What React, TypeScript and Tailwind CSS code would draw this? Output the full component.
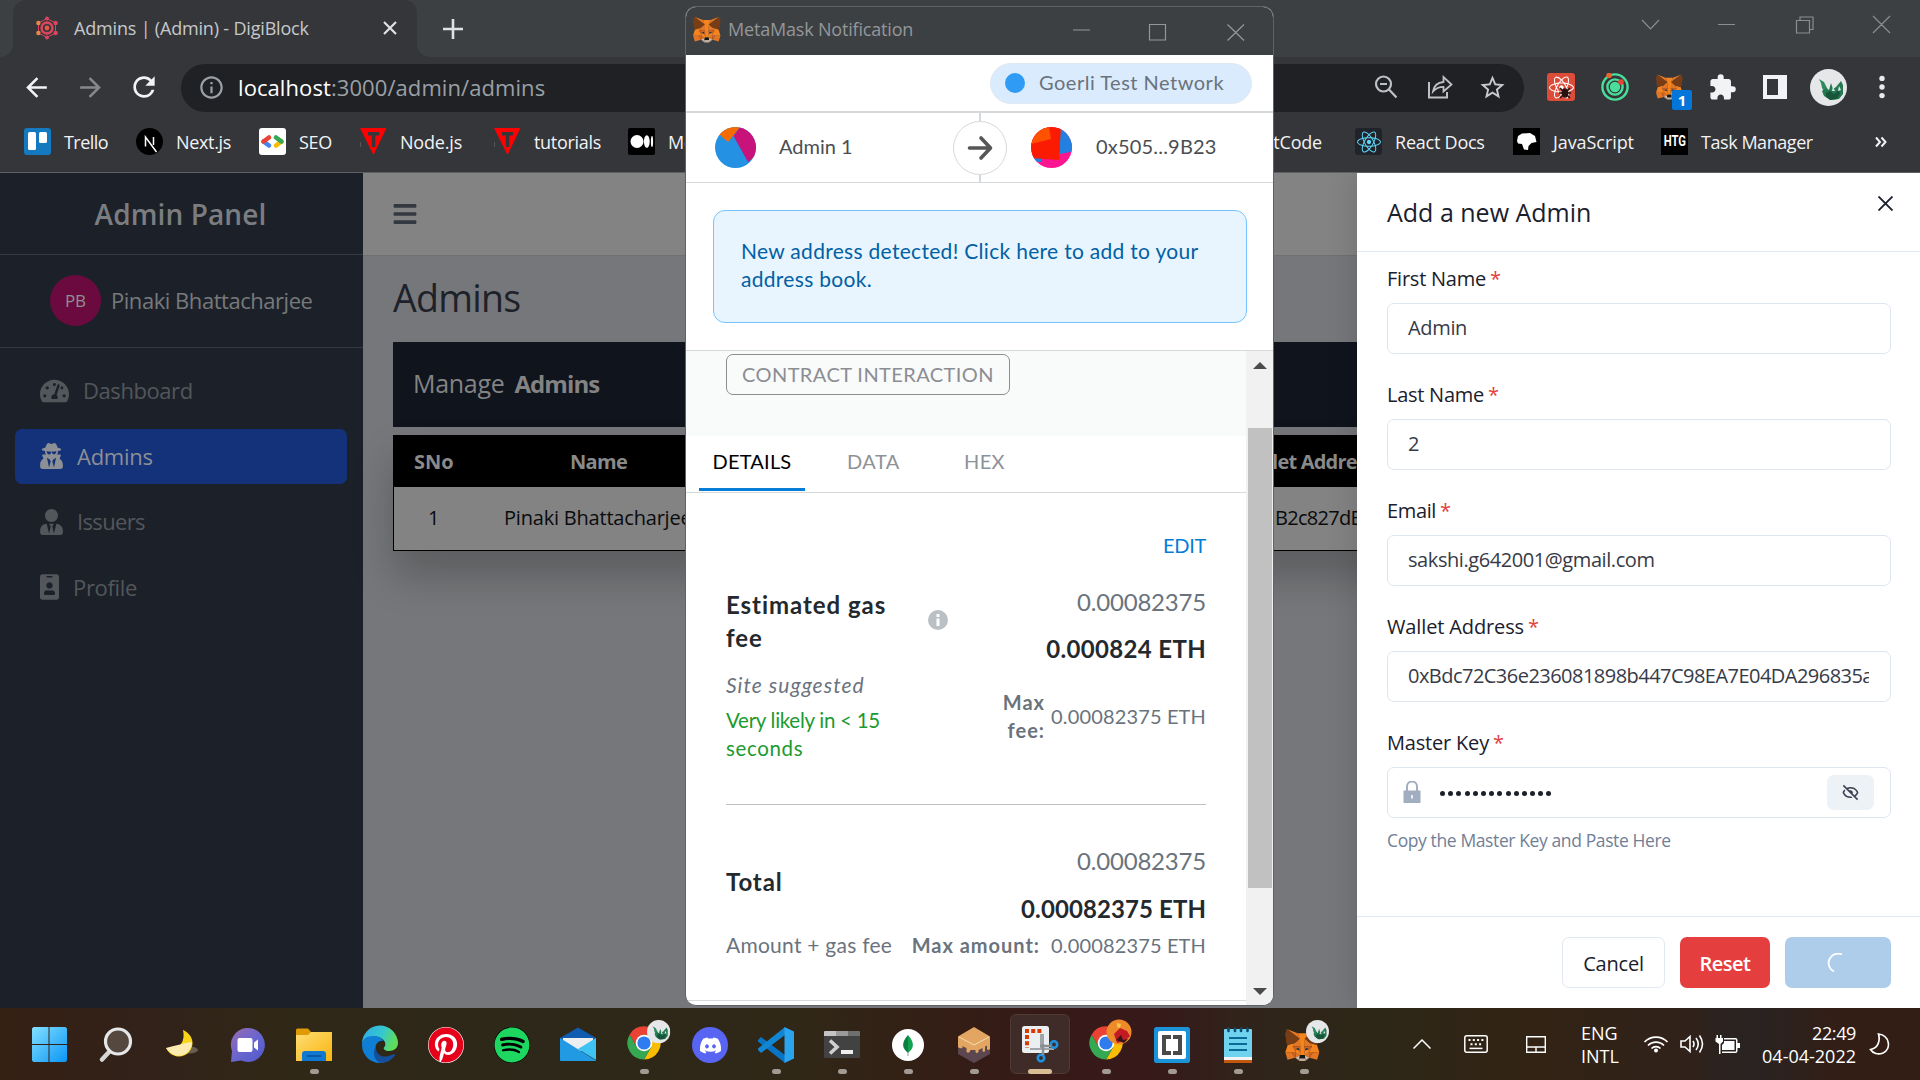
import type { ReactNode } from "react";
import { FaBars, FaDiscord, FaIdBadge, FaPinterest, FaReact, FaSpotify, FaTachometerAlt, FaUserSecret, FaUserTie } from "react-icons/fa";
import { MdArrowBack, MdArrowForward, MdExtension, MdInfoOutline, MdRefresh, MdStarBorder } from "react-icons/md";
import { BiHide } from "react-icons/bi";

const FOX: [string, string][] = [
  ["#E17726", "M32.96 1 19.82 10.7l2.45-5.73z"],
  ["#E27625", "m2.66 1 13.02 9.8L13.35 4.98zM28.23 23.53l-3.5 5.34 7.49 2.06 2.14-7.28zM1.27 23.65l2.13 7.28 7.47-2.06-3.48-5.34zM10.47 14.51l-2.08 3.14 7.4.34-.25-7.97zM25.15 14.51l-5.16-4.58-.17 8.06 7.4-.34zM10.87 28.87l4.49-2.16-3.86-3.01zM20.27 26.71l4.46 2.16-.61-5.17z"],
  ["#D5BFB2", "m24.73 28.87-4.46-2.16.37 2.89-.04 1.23zM10.87 28.87l4.16 1.96-.03-1.23.36-2.89z"],
  ["#CC6228", "m10.87 28.87.65-5.34-4.13.12zM24.1 23.53l.63 5.34 3.5-5.22zM27.22 17.65l-7.4.34.69 3.8 1.09-2.29 2.64 1.2zM11.38 20.69l2.63-1.2 1.09 2.3.69-3.8-7.4-.34z"],
  ["#233447", "m15.1 21.78-3.72-1.09 2.63-1.2zM20.51 21.78l1.09-2.29 2.64 1.2z"],
  ["#E27525", "m8.39 17.65 3.1 6.05-.1-3.01zM24.24 20.69l-.12 3.01 3.1-6.05zM15.79 17.99l-.69 3.8.87 4.48.2-5.91zM19.82 17.99l-.37 2.35.19 5.93.87-4.49z"],
  ["#F5841F", "m20.51 21.78-.87 4.49.63.44 3.85-3.01.12-3.01zM11.38 20.69l.11 3.01 3.87 3.01.61-.44-.87-4.48zM32.04 16.52l-6.89-2.01 2.07 3.14-3.1 6.05 4.11-.05h6.13zM10.47 14.51l-6.9 2.01-2.3 7.13h6.12l4.1.05-3.1-6.05zM19.82 17.99l.44-7.6 2-5.41h-8.91l1.99 5.41.45 7.6.16 2.37.01 5.91h3.67l.02-5.91z"],
  ["#C0AC9D", "m20.6 30.83.04-1.23-.33-.29h-5l-.31.29.03 1.23-4.16-1.96 1.45 1.19 2.95 2.04h5.06l2.96-2.04 1.44-1.19z"],
  ["#161616", "m20.27 26.71-.63-.44h-3.67l-.61.44-.36 2.89.31-.29h5l.33.29z"],
  ["#763D16", "m33.51 11.35 1.11-5.36L32.96 1l-12.69 9.4 4.88 4.11 6.89 2.01 1.52-1.78-.66-.48 1.05-.96-.8-.62 1.05-.8zM.99 5.99l1.13 5.36-.72.53 1.07.8-.8.62 1.05.96-.66.48 1.5 1.78 6.89-2.01 4.91-4.11L2.66 1z"],
];

function Fox({ className }: { className: string }) {
  return (
    <svg viewBox="0 0 35 33" className={className}>
      {FOX.map(([fill, d]) => (
        <path key={d} fill={fill} d={d} />
      ))}
    </svg>
  );
}

function Dragon({ className }: { className: string }) {
  return (
    <svg viewBox="0 0 37 37" className={className}>
      <circle cx="18.5" cy="18.5" r="18.5" fill="#e6e7e8" />
      <path fill="#2f8a5f" d="M9 10l5 3 4 8 1 4-4-1-3-5-1-5z" />
      <path fill="#237a52" d="M16 19l3 2 2-7 2 6 3-2 5-6 2 4v9l-4 5-8 1-7-4-2-5z" />
      <path fill="#17563a" d="M16 24l4-2 4 3 5-4 1 4-3 5-7 1-4-3z" />
      <path fill="#e6e7e8" d="M22 22l1-4 2 4zM28 22l1-5 2 4z" />
    </svg>
  );
}

function Chrome({ children }: { children?: ReactNode }) {
  return (
    <svg viewBox="0 0 46 46" className="absolute left-[10px] top-[10px] size-[46px] overflow-visible">
      <g transform="translate(23 25)">
        <path fill="#ea4335" d="M-14.4-8.3A16.6 16.6 0 0 1 14.4-8.3L0-8.3-7.2 4.1z" />
        <path fill="#fbbc04" d="M14.4-8.3A16.6 16.6 0 0 1 0 16.6L7.2 4.1 0-8.3z" />
        <path fill="#34a853" d="M0 16.6A16.6 16.6 0 0 1-14.4-8.3L-7.2 4.1 7.2 4.1z" />
        <circle r="8.3" fill="#fff" />
        <circle r="6.6" fill="#2f7cf0" />
      </g>
      {children}
    </svg>
  );
}

/* ---------- browser chrome ---------- */

function TabStrip() {
  return (
    <div className="flex h-[57px] bg-[#3c4043]">
      <div className="w-[13px] bg-[#35363a]">
        <div className="h-full rounded-br-[13px] bg-[#3c4043]" />
      </div>
      <div className="flex w-[404px] items-center rounded-t-[13px] bg-[#35363a] pb-px pl-[22px]">
        <svg viewBox="0 0 24 24" className="size-6 text-[#d9445f]" fill="currentColor">
          <circle cx="12" cy="12" r="5.4" fill="none" stroke="currentColor" strokeWidth="2.6" />
          <circle cx="12" cy="12" r="2.4" fill="#e9583f" />
          <path stroke="currentColor" strokeWidth="1" fill="none" d="M12 2.5 20.5 7v10L12 21.5 3.5 17V7z" />
          <circle cx="12" cy="2.6" r="2" />
          <circle cx="12" cy="21.4" r="2" />
          <circle cx="20.6" cy="7" r="2.2" />
          <circle cx="20.6" cy="17" r="2.2" />
          <circle cx="3.4" cy="7" r="2.2" fill="#e8894a" />
          <circle cx="3.4" cy="17" r="2.2" fill="#e8894a" />
        </svg>
        <span className="ml-[15px] w-[309px] text-lg tracking-[-0.18px] text-[#c6c8ca]">Admins | (Admin) - DigiBlock</span>
        <svg viewBox="0 0 14 14" className="size-[14px]" stroke="#dfe1e5" strokeWidth="2.2">
          <path d="M1 1l12 12M13 1L1 13" />
        </svg>
      </div>
      <div className="w-[13px] bg-[#35363a]">
        <div className="h-full rounded-bl-[13px] bg-[#3c4043]" />
      </div>
      <svg viewBox="0 0 20 20" className="ml-[13px] mt-[19px] size-5" stroke="#dfe1e5" strokeWidth="2.6">
        <path d="M10 0v20M0 10h20" />
      </svg>
      <div className="flex-1" />
      <svg viewBox="0 0 250 20" className="mr-[29px] mt-[14px] h-5 w-[250px]" fill="none" stroke="#8b8e90" strokeWidth="1.2">
        <path d="M1 6l8.500 9L18 6M77 10.500h17M155.500 6.500h13v12.500h-13zM159 6V3h13v12.500h-3.500M232 2l17 17M249 2l-17 17" />
      </svg>
    </div>
  );
}

function Toolbar() {
  return (
    <div className="flex h-[62px] items-center bg-[#35363a] pb-[2px] pl-[21px]">
      <MdArrowBack className="size-[31px] text-[#f1f3f4]" />
      <MdArrowForward className="ml-[23px] size-[31px] text-[#86888a]" />
      <MdRefresh className="ml-[22px] size-[32px] text-[#f1f3f4]" />
      <div className="ml-[21px] mt-[2px] flex h-12 w-[1343px] items-center rounded-full bg-[#202124] pb-[2px] pl-[17px] pr-[17px]">
        <MdInfoOutline className="size-[27px] text-[#9aa0a6]" />
        <span className="ml-[13px] text-[22px] tracking-[0.08px] text-[#9aa0a6]">
          <span className="text-white">localhost</span>:3000/admin/admins
        </span>
        <div className="flex-1" />
        <svg viewBox="0 0 24 24" className="size-[24px]" fill="none" stroke="#bdc1c6" strokeWidth="2.2">
          <circle cx="9.500" cy="9" r="7.500" />
          <path d="M15 14.500l7.500 8M6 9h7" />
        </svg>
        <svg viewBox="0 0 26 24" className="ml-[29px] h-[24px] w-[26px]" fill="none" stroke="#bdc1c6" strokeWidth="2">
          <path d="M2 7v15.500h18V17" />
          <path strokeWidth="1.800" d="M6 16.500C7 10.500 10.500 7.500 16.500 7V2l8 7.500-8 7V11.800C12 11.800 9 13 6 16.500z" />
        </svg>
        <MdStarBorder className="ml-[25px] size-[29px] text-[#c6c9cd]" />
      </div>
      <div className="relative ml-[23px] flex size-[28px] items-center justify-center rounded-[3px] bg-[#dd4b39]">
        <FaReact className="size-[25px] text-white" />
        <svg viewBox="0 0 14 14" className="absolute left-[11px] top-[12px] size-[14px]" stroke="#2a1210" strokeWidth="1.600">
          <ellipse cx="7" cy="8" rx="2.600" ry="4" fill="#2a1210" />
          <path d="M2 3l3 3M12 3L9 6M1 8h12M2 13l3-3M12 13l-3-3" />
        </svg>
      </div>
      <svg viewBox="0 0 28 28" className="ml-[26px] size-7" fill="none" stroke="#4ade9b" strokeWidth="2.400">
        <circle cx="14" cy="14" r="4" fill="#4ade9b" />
        <circle cx="14" cy="14" r="7.600" />
        <circle cx="14" cy="14" r="12.600" />
        <circle cx="8" cy="2.500" r="2.800" fill="#e8642c" stroke="none" />
        <circle cx="20" cy="9" r="2.800" fill="#ea4335" stroke="none" />
      </svg>
      <div className="relative ml-[26px] size-[28px]">
        <Fox className="size-[28px]" />
        <span className="absolute left-[17px] top-[17px] flex h-[20px] w-[20px] items-center justify-center rounded-[2px] bg-[#0376d9] text-[15px] font-bold leading-none text-white">1</span>
      </div>
      <MdExtension className="ml-[25px] size-[29px] text-[#f1f3f4]" />
      <svg viewBox="0 0 24 24" className="ml-[26px] size-6">
        <path fill="#f1f3f4" fillRule="evenodd" d="M0 0h24v24H0zM4 4v16h11V4z" />
      </svg>
      <Dragon className="ml-[23px] size-[37px]" />
      <svg viewBox="0 0 6 24" className="ml-[32px] h-6 w-[6px]" fill="#e8eaed">
        <circle cx="3" cy="3.400" r="2.700" />
        <circle cx="3" cy="12" r="2.700" />
        <circle cx="3" cy="20.600" r="2.700" />
      </svg>
    </div>
  );
}

function Bookmark({ icon, label, width, tracking }: { icon: ReactNode; label: string; width: string; tracking: string }) {
  return (
    <div className={`flex shrink-0 items-center ${width}`}>
      {icon}
      <span className={`ml-[13px] whitespace-nowrap text-lg text-[#f1f3f4] ${tracking}`}>{label}</span>
    </div>
  );
}

function TutorialMark() {
  return (
    <svg viewBox="0 0 27 27" className="size-[27px]">
      <path fill="#f00" d="M0 0h26.500L13.500 27z" />
      <path fill="#35363a" d="M8 4h11v3.500h-3.800V19h-3.400V7.500H8z" />
      <path stroke="#555" d="M.5 14v5" />
    </svg>
  );
}

function BookmarksBar() {
  return (
    <div className="flex h-[54px] items-center border-b border-[#5f6063] bg-[#35363a] pb-[8px] pl-6">
      <Bookmark width="w-[112px]" tracking="tracking-[-0.55px]" label="Trello" icon={
        <svg viewBox="0 0 27 27" className="size-[27px]"><rect width="27" height="27" rx="3" fill="#1479bf" /><rect x="4" y="4" width="8" height="18" rx="1.500" fill="#fff" /><rect x="15" y="4" width="8" height="11" rx="1.500" fill="#fff" /></svg>
      } />
      <Bookmark width="w-[123px]" tracking="tracking-[-0.34px]" label="Next.js" icon={
        <svg viewBox="0 0 27 27" className="size-[27px]"><circle cx="13.500" cy="13.500" r="13.500" fill="#000" /><path d="M9.500 18.500V9l11 15M17.500 9v8" fill="none" stroke="#fff" strokeWidth="1.500" /></svg>
      } />
      <Bookmark width="w-[101px]" tracking="tracking-[-0.29px]" label="SEO" icon={
        <svg viewBox="0 0 27 27" className="size-[27px]" fill="none" strokeWidth="4.600" strokeLinecap="round"><rect width="27" height="27" rx="3" fill="#fff" /><path stroke="#4285f4" d="M4.500 13.500l5.500 4" /><path stroke="#ea4335" d="M4.500 13.500l5.500-4" /><path stroke="#fbbc04" d="M22.500 13.500l-5.500 4" /><path stroke="#34a853" d="M17 9.500l5.500 4" /></svg>
      } />
      <Bookmark width="w-[134px]" tracking="tracking-[-0.19px]" label="Node.js" icon={<TutorialMark />} />
      <Bookmark width="w-[134px]" tracking="tracking-[-0.3px]" label="tutorials" icon={<TutorialMark />} />
      <Bookmark width="w-[120px]" tracking="tracking-[-0.2px]" label="Medium" icon={
        <svg viewBox="0 0 27 27" className="size-[27px]" fill="#fff"><rect width="27" height="27" rx="2" fill="#000" /><ellipse cx="9" cy="13.500" rx="6.500" ry="6.500" /><ellipse cx="18.800" cy="13.500" rx="2.900" ry="6.300" /><ellipse cx="24" cy="13.500" rx="1.100" ry="5.600" /></svg>
      } />
      <div className="flex-1" />
      <span className="mr-[33px] text-lg tracking-[-0.2px] text-[#f1f3f4]">LeetCode</span>
      <Bookmark width="w-[158px]" tracking="tracking-[-0.23px]" label="React Docs" icon={
        <span className="flex size-[27px] items-center justify-center rounded-[3px] bg-[#20232a]"><FaReact className="size-[24px] text-[#5ed3f3]" /></span>
      } />
      <Bookmark width="w-[148px]" tracking="tracking-[-0.07px]" label="JavaScript" icon={
        <svg viewBox="0 0 27 27" className="size-[27px]"><path fill="#000" d="M0 0h27v27H0z" /><path fill="#fff" d="M4 13l1-5 4-2.500 8-.5 5 3 1.500 6-5 1-3 3-.5 4-4-.5-2-5.500-4-.5z" /></svg>
      } />
      <Bookmark width="w-[214px]" tracking="tracking-[-0.45px]" label="Task Manager" icon={
        <span className="flex h-[27px] w-[27px] items-center justify-center bg-black"><span className="scale-x-[0.75] font-['Roboto'] text-[15px] font-bold leading-none text-white">HTG</span></span>
      } />
      <svg viewBox="0 0 12 12" className="mr-[33px] size-3" fill="none" stroke="#f1f3f4" strokeWidth="2"><path d="M1 1.500l4 4.500-4 4.500M6.500 1.500l4 4.500-4 4.500" /></svg>
    </div>
  );
}

/* ---------- admin site ---------- */

function Sidebar() {
  const nav = [
    { label: "Dashboard", icon: <FaTachometerAlt className="h-[26px] w-[29px]" />, cls: "text-[#53565b] tracking-[-0.43px]" },
    { label: "Admins", icon: <FaUserSecret className="h-[26px] w-[23px]" />, cls: "bg-[#13327a] text-[#8c8f95] tracking-[-0.25px]" },
    { label: "Issuers", icon: <FaUserTie className="h-[26px] w-[23px]" />, cls: "text-[#53565b] tracking-[-0.65px]" },
    { label: "Profile", icon: <FaIdBadge className="h-[26px] w-[19px]" />, cls: "text-[#53565b] tracking-[-0.33px]" },
  ];
  return (
    <aside className="flex w-[363px] shrink-0 flex-col bg-[#1c2129]">
      <div className="flex h-[82px] items-center justify-center border-b border-[#343a44] pr-[2px] text-[28px] font-semibold tracking-[0.1px] text-[#7b7d80]">Admin Panel</div>
      <div className="flex h-[93px] items-center border-b border-[#343a44] pb-px pl-[50px]">
        <div className="flex size-[51px] items-center justify-center rounded-full bg-[#6b0a3f] text-[17px] text-[#8f8f91]">PB</div>
        <span className="ml-[10px] text-[22px] tracking-[-0.46px] text-[#77797c]">Pinaki Bhattacharjee</span>
      </div>
      <nav className="ml-[15px] mr-[16px] mt-[15px] flex flex-col gap-[10.500px]">
        {nav.map((n) => (
          <div key={n.label} className={`flex h-[55px] items-center gap-[14px] rounded-[7px] pl-[25px] text-[22px] ${n.cls}`}>
            {n.icon}
            <span>{n.label}</span>
          </div>
        ))}
      </nav>
    </aside>
  );
}

function AdminPage() {
  return (
    <main className="flex min-w-0 flex-1 flex-col bg-[#76777a]">
      <div className="flex h-[83px] shrink-0 items-center border-b border-[#6f7072] bg-[#838383] pl-[29px]">
        <FaBars className="size-[26px] text-[#343841]" />
      </div>
      <div className="flex flex-col pl-[30px]">
        <h1 className="mt-[16px] h-[70px] text-[37.500px] leading-[52px] tracking-[-0.7px] text-[#1d2129]">Admins</h1>
        <div className="flex h-[85px] items-center bg-[#0f141d] pb-px pl-5 text-[25px] text-[#838383]">
          <span className="tracking-[-0.3px]">Manage</span>
          <b className="ml-[10px] text-[24px] tracking-[-0.9px]">Admins</b>
        </div>
        <div className="mt-2 border border-black text-xl shadow-[0_25px_40px_rgba(0,0,0,0.22)]">
          <div className="flex h-[51px] items-center bg-black font-bold text-[#8a8a8a]">
            <span className="w-[122px] pl-[20px]">SNo</span>
            <span className="w-[165px] text-center tracking-[-0.7px]">Name</span>
            <span className="ml-[556px] whitespace-nowrap tracking-[-0.8px]">Wallet Address</span>
          </div>
          <div className="flex h-[63px] items-center bg-[#838383] pb-px text-[#0a0b0d]">
            <span className="w-[110px] pl-[34px]">1</span>
            <span className="w-[300px] tracking-[-0.2px]">Pinaki Bhattacharjee</span>
            <span className="ml-[471px] tracking-[-0.7px]">B2c827dB</span>
          </div>
        </div>
      </div>
    </main>
  );
}

function Field({ label, tracking, children }: { label: string; tracking: string; children: ReactNode }) {
  return (
    <div className="h-[116px]">
      <div className={`h-[38px] text-xl font-medium leading-[28px] text-[#1a202c] ${tracking}`}>
        {label}<span className="ml-[4px] font-normal text-[#e53e3e]">*</span>
      </div>
      <div className="flex h-[51px] items-center rounded-[7px] border border-[#dfe6ef] text-xl text-[#363b47]">{children}</div>
    </div>
  );
}

function Drawer() {
  return (
    <section className="absolute right-0 top-0 flex h-full w-[563px] flex-col bg-white shadow-[0_0_30px_rgba(0,0,0,0.15)]">
      <header className="flex h-[79px] items-center justify-between border-b border-[#e2e8f0] pl-[30px] pr-[27px]">
        <h2 className="text-[25px] font-medium leading-[32px] text-[#1a202c]">Add a new Admin</h2>
        <svg viewBox="0 0 15 15" className="mb-[18px] size-[15px]" stroke="#1a202c" strokeWidth="1.900"><path d="M.5.5l14 14M14.500.5l-14 14" /></svg>
      </header>
      <div className="flex flex-1 flex-col pl-[30px] pr-[29px] pt-[12.500px]">
        <Field label="First Name" tracking="tracking-[-0.23px]"><span className="pl-[20px] tracking-[-0.34px]">Admin</span></Field>
        <Field label="Last Name" tracking="tracking-[-0.26px]"><span className="pl-[20px]">2</span></Field>
        <Field label="Email" tracking="tracking-[-0.37px]"><span className="pl-[20px] tracking-[-0.42px]">sakshi.g642001@gmail.com</span></Field>
        <Field label="Wallet Address" tracking="tracking-[-0.13px]">
          <span className="ml-[20px] w-[461px] overflow-hidden whitespace-nowrap tracking-[-0.53px]">0xBdc72C36e236081898b447C98EA7E04DA296835a</span>
        </Field>
        <Field label="Master Key" tracking="tracking-[-0.19px]">
          <svg viewBox="0 0 18 22" className="ml-[15px] h-[22px] w-[18px]" fill="#a0aec0"><path d="M4 10V5.500a5 5 0 0 1 10 0V10" fill="none" stroke="#a0aec0" strokeWidth="2" /><path fillRule="evenodd" d="M.5 9.500h17V22H.5zM8.200 14v3.500h1.600V14z" /></svg>
          <span className="ml-[19px] mt-[2px] flex gap-[3.200px]">
            {Array.from({ length: 14 }, (_, i) => <i key={i} className="size-[5px] rounded-full bg-[#1a202c]" />)}
          </span>
          <span className="ml-auto mr-[16px] flex h-[35px] w-[47px] items-center justify-center rounded-[7px] bg-[#edf2f7]"><BiHide className="size-[19px] text-[#3a4150]" /></span>
        </Field>
        <p className="-mt-[18px] text-[17.500px] leading-[26px] tracking-[-0.39px] text-[#718096]">Copy the Master Key and Paste Here</p>
      </div>
      <footer className="flex h-[92px] items-start justify-end gap-[15px] border-t border-[#e2e8f0] pr-[29px] pt-[20px] text-xl font-semibold tracking-[-0.5px]">
        <div className="flex h-[51px] w-[103px] items-center justify-center rounded-[7px] border border-[#e2e8f0] pt-[2px] font-medium tracking-[-0.2px] text-[#1a202c]">Cancel</div>
        <div className="flex h-[51px] w-[90px] items-center justify-center rounded-[7px] bg-[#e53e3e] pt-[2px] text-white">Reset</div>
        <div className="flex h-[51px] w-[106px] items-center justify-center rounded-[7px] bg-[#adcdeb]">
          <svg viewBox="0 0 20 20" className="mr-[3px] size-5" fill="none" stroke="#fff" strokeWidth="1.800"><path d="M15 1.500A9 9 0 0 0 7 18.500" /></svg>
        </div>
      </footer>
    </section>
  );
}

/* ---------- wallet popup ---------- */

function WalletWindow() {
  return (
    <div className="absolute left-[685px] top-[6px] flex h-[1000px] w-[589px] flex-col overflow-hidden rounded-[11px] border border-[#606366] bg-white font-[Lato,sans-serif] text-xl">
      <div className="flex h-[48px] shrink-0 items-center bg-[#3c4043] pb-[4px] pl-[6px]">
        <Fox className="size-[29px]" />
        <span className="ml-[7px] w-[345px] font-['Open_Sans'] text-lg tracking-[-0.18px] text-[#94979a]">MetaMask Notification</span>
        <svg viewBox="0 0 172 18" className="mt-[5px] h-[18px] w-[172px]" fill="none" stroke="#94979a" strokeWidth="1.200"><path d="M0 7h17M76.500 1.500h16v15.500h-16zM154.500 1.500l16.500 16M171 1.500l-16.500 16" /></svg>
      </div>
      <div className="flex h-[58px] shrink-0 items-center justify-end border-b-2 border-[#d6d9dc] pr-[21px]">
        <div className="flex h-[41px] w-[262px] items-center rounded-full border border-[#e1e8ef] bg-[#d9ebfc] pl-[14px] text-[#6a737d]">
          <i className="mr-[14px] size-5 rounded-full bg-[#2f9bf5]" />
          <span className="mb-[2px] tracking-[0.5px]">Goerli Test Network</span>
        </div>
      </div>
      <div className="relative flex h-[70px] shrink-0 items-center border-b border-[#d6d9dc] pl-[29px] text-[#4a4e53]">
        <svg viewBox="0 0 41 41" className="size-[41px]">
          <clipPath id="ava"><circle cx="20.500" cy="20.500" r="20.500" /></clipPath>
          <g clipPath="url(#ava)"><path fill="#2491e2" d="M0 0h41v41H0z" /><path fill="#c8147a" d="M25 0L18.500 9 33 35l12-10V0z" /><path fill="#f56b00" d="M4 7L13 15 25 0H8z" /></g>
        </svg>
        <span className="mb-[3px] ml-[23px] w-[174px]">Admin 1</span>
        <div className="flex h-full w-[54px] flex-col items-center">
          <i className="w-[2px] flex-1 bg-[#d6d9dc]" />
          <span className="flex size-[54px] items-center justify-center rounded-full border border-[#d6d9dc]">
            <svg viewBox="0 0 26 26" className="size-[26px]" fill="none" stroke="#565656" strokeWidth="3.600" strokeLinecap="round" strokeLinejoin="round"><path d="M2.500 13H23M14 3l9.500 10L14 23" /></svg>
          </span>
          <i className="w-[2px] flex-1 bg-[#d6d9dc]" />
        </div>
        <svg viewBox="0 0 41 41" className="ml-[24px] size-[41px]">
          <clipPath id="avb"><circle cx="20.500" cy="20.500" r="20.500" /></clipPath>
          <g clipPath="url(#avb)"><path fill="#ff1590" d="M0 0h41v41H0z" /><path fill="#2380e0" d="M29 0h14v24l-14 3zM0 29h10v6H0z" /><path fill="#fb1b02" d="M0 0h30l-2 33L0 31z" /><path fill="#ff5200" d="M0 0h18l2 12-20 5z" /></g>
        </svg>
        <span className="mb-[3px] ml-[24px] tracking-[0.2px]">0x505...9B23</span>
      </div>
      <div className="h-[168px] shrink-0 border-b border-[#d6d9dc] px-[27px] pt-[27px]">
        <div className="h-[113px] w-[534px] whitespace-nowrap rounded-[12px] border border-[#75c4fd] bg-[#e8f5ff] pl-[27px] pt-[26px] text-[21px] leading-[28px] tracking-[0.3px] text-[#0260a4]">
          New address detected! Click here to add to your
          <br />
          address book.
        </div>
      </div>
      <div className="flex min-h-0 flex-1">
        <div className="flex w-[560px] flex-col">
          <div className="h-[85px] shrink-0 bg-[#f9fafa] pl-[40px] pt-[3px]">
            <div className="flex h-[41px] w-[284px] items-center justify-center rounded-[7px] border border-[#8b8d92] pb-[2px] tracking-[0.42px] text-[#8b8d92]">CONTRACT INTERACTION</div>
          </div>
          <div className="flex h-[57px] shrink-0 border-b border-[#d6d9dc] pl-[13px] leading-[50px] text-[#8f9297]">
            <span className="h-[55px] w-[106px] border-b-[3px] border-[#037dd6] text-center tracking-[0.2px] text-black">DETAILS</span>
            <span className="ml-[42px] w-[117px] tracking-[0.5px]">DATA</span>
            <span className="tracking-[0.4px]">HEX</span>
          </div>
          <div className="ml-[40px] mr-[40px] flex h-[312px] shrink-0 flex-col border-b border-[#bbc0c5] pt-[38px]">
            <span className="text-right leading-[28px] tracking-[-0.3px] text-[#037dd6]">EDIT</span>
            <div className="flex">
              <div className="flex w-[202px] flex-col pt-[29px]">
                <h3 className="w-[175px] text-2xl font-bold leading-[33px] tracking-[0.95px] text-[#24292e]">Estimated gas fee</h3>
                <i className="mt-[17px] text-[21px] leading-[28px] tracking-[1.05px] text-[#6a737d]">Site suggested</i>
                <span className="mt-[7px] w-[170px] text-[20.500px] leading-[28px] tracking-[-0.27px] text-[#1c9a2f]">Very likely in &lt; 15 <span className="tracking-[0.65px]">seconds</span></span>
              </div>
              <svg viewBox="0 0 20 20" className="mt-[51px] size-5"><circle cx="10" cy="10" r="10" fill="#bbc0c5" /><path fill="#fff" d="M8.500 8.500h3V16h-3zM8.500 4h3v3h-3z" /></svg>
              <div className="flex flex-1 flex-col items-end pt-[28px]">
                <span className="text-[24px] leading-[30px] tracking-[-0.2px] text-[#6a737d]">0.00082375</span>
                <b className="mt-[17px] text-2xl leading-[30px] tracking-[0.35px] text-[#24292e]">0.000824 ETH</b>
                <div className="mt-[24px] flex items-center text-[#6a737d]">
                  <b className="w-[49px] text-right leading-[28px] tracking-[1px]">Max fee:</b>
                  <span className="mb-px ml-[6px] tracking-[0.15px]">0.00082375 ETH</span>
                </div>
              </div>
            </div>
          </div>
          <div className="ml-[40px] mr-[40px] flex h-[195px] shrink-0 text-[#6a737d]">
            <div className="flex flex-1 flex-col pt-[62px]">
              <h3 className="text-2xl font-bold leading-[30px] tracking-[0.9px] text-[#24292e]">Total</h3>
              <span className="mt-[34px] whitespace-nowrap text-[21px] leading-[28px] tracking-[0.25px]">Amount + gas fee</span>
            </div>
            <div className="flex flex-col items-end pt-[41px]">
              <span className="text-[24px] leading-[30px] tracking-[-0.2px]">0.00082375</span>
              <b className="mt-[18px] text-2xl leading-[30px] tracking-[0.1px] text-[#24292e]">0.00082375 ETH</b>
              <div className="mt-[7px] flex leading-[28px]">
                <b className="tracking-[0.98px]">Max amount:</b>
                <span className="ml-[11px] tracking-[0.15px]">0.00082375 ETH</span>
              </div>
            </div>
          </div>
          <div className="flex-1 border-t border-[#d6d9dc]" />
        </div>
        <div className="flex w-[27px] flex-col items-center bg-[#f1f1f1] pb-[10px] pt-[11px]">
          <svg viewBox="0 0 14 7" className="h-[7px] w-[14px]" fill="#4b4b4b"><path d="M7 0l7 7H0z" /></svg>
          <i className="mt-[59px] h-[460px] w-[24px] bg-[#c1c1c1]" />
          <svg viewBox="0 0 14 7" className="mt-auto h-[7px] w-[14px]" fill="#4b4b4b"><path d="M7 7l7-7H0z" /></svg>
        </div>
      </div>
    </div>
  );
}

/* ---------- taskbar ---------- */

function Task({ children, running }: { children?: ReactNode; running?: boolean }) {
  return (
    <div className="relative flex h-[72px] w-[66px] items-center justify-center">
      {children}
      {running && <i className="absolute bottom-[6px] left-[28.500px] h-[5px] w-[9px] rounded-full bg-[#a29b93]" />}
    </div>
  );
}

const S = "mb-[-2px] size-9 overflow-visible";

function Taskbar() {
  return (
    <div className="flex h-[72px] bg-[linear-gradient(90deg,#352014_0%,#32221a_8%,#302717_14%,#2d2819_28%,#302717_42%,#331f15_48%,#361a17_54%,#37191a_60%,#30241a_65%,#2d2717_72%,#322315_80%,#30221a_88%,#282322_91%,#331e15_96%,#331e15_100%)] pl-[17px]">
      <Task>
        <svg viewBox="0 0 36 36" className={S}>
          <defs><linearGradient id="win" x1="0" y1="0" x2="1" y2="1"><stop stopColor="#83e0ff" /><stop offset="1" stopColor="#0a95f5" /></linearGradient></defs>
          <path fill="url(#win)" d="M1.500 0H16.500V17H0V1.500zM17.500 0H33.500L35 1.500V17h-17.500zM0 18h16.500v17H1.500L0 33.500zM17.500 18H35v15.500L33.500 35H17.500z" />
        </svg>
      </Task>
      <Task>
        <svg viewBox="0 0 36 36" className={S}><path d="M11 25L4 32.500" stroke="#d5d5d5" strokeWidth="4.500" strokeLinecap="round" /><circle cx="20" cy="14.500" r="12.500" fill="#55483f" stroke="#e6e7e8" strokeWidth="3.200" /></svg>
      </Task>
      <Task>
        <svg viewBox="0 0 36 36" className={S}><ellipse cx="25" cy="23" rx="9" ry="3.500" fill="#8b8578" opacity=".6" /><path fill="#fbd51c" d="M19 3c9 4 13 14 6 22-6 7-18 6-23-4 12 3 20-5 17-18z" /><path fill="#fdecb0" d="M2 21c9-2 17-5 26-6 0 12-15 21-26 6z" /></svg>
      </Task>
      <Task>
        <svg viewBox="0 0 36 36" className={S}>
          <defs><linearGradient id="tm" x1="0" y1="0" x2="1" y2="1"><stop stopColor="#9a6cae" /><stop offset=".5" stopColor="#6a66cf" /><stop offset="1" stopColor="#5059c9" /></linearGradient></defs>
          <path fill="url(#tm)" d="M1 35l1-11A17 17 0 1 1 11 33.500z" /><rect x="7.500" y="11" width="15" height="14" rx="2" fill="#fff" /><path fill="#fff" d="M24 15.500l4-3v11l-4-3z" />
        </svg>
      </Task>
      <Task running>
        <svg viewBox="0 0 36 36" className={S}>
          <defs><linearGradient id="fd" x1="0" y1="0" x2="1" y2="1"><stop stopColor="#ffdd74" /><stop offset="1" stopColor="#f8b50f" /></linearGradient></defs>
          <path fill="#e09a05" d="M0 3q0-1.500 1.500-1.500H12L15 5v5H0z" /><path fill="url(#fd)" d="M0 8h12l3-3h21v29H0z" /><path fill="#0f78d0" d="M6 34V27q0-3 3-3h18q3 0 3 3v7z" /><path stroke="#0a4f93" strokeWidth="1.500" d="M11 29h14" />
        </svg>
      </Task>
      <Task>
        <svg viewBox="0 0 36 36" className={S}>
          <defs><linearGradient id="ed" x1="0" y1="0" x2="1" y2=".3"><stop stopColor="#2fa8e8" /><stop offset=".6" stopColor="#35c8cf" /><stop offset="1" stopColor="#5fdc5a" /></linearGradient></defs>
          <path fill="url(#ed)" d="M0 17A18 18 0 0 1 36 16c0 5-4 8-9 8-4 0-6-2-5-3.500 4-4-1-11-9-11C6 9.500 1 13 0 17z" />
          <path fill="#0f7fd6" d="M0 18C0 12 5 9 11 9c5 0 9 2 10.500 5-4-1-8 2-8 7 0 8 8 14 16 10.500C25 35 22 36 18 36 8 36 0 28 0 18z" />
          <path fill="#134f9c" d="M13.500 20c0 6 6 11.500 13 9 4-1 5-3 7-1-3 4-9 8-15 8-5-2-9-9-5-16z" />
        </svg>
      </Task>
      <Task><span className="mb-[-2px] rounded-full bg-white"><FaPinterest className="size-9 text-[#e60019]" /></span></Task>
      <Task><span className="mb-[-2px] rounded-full bg-black"><FaSpotify className="size-9 text-[#1ed760]" /></span></Task>
      <Task>
        <svg viewBox="0 0 36 36" className={S}><path fill="#0f5cb0" d="M0 11L18 .5 36 11v10H0z" /><path fill="#eceef0" d="M3 11h30v7L18 25 3 18z" /><path fill="#3ec3f3" d="M36 11v22L18 22z" /><path fill="#2199e3" d="M0 11l36 22.500q0 .5-1 .5H1q-1 0-1-1z" /></svg>
      </Task>
      <Task running><Chrome><g transform="translate(26 2) scale(.63)"><Dragon className="size-[37px]" /></g></Chrome></Task>
      <Task>
        <span className="mb-[-2px] flex size-9 items-center justify-center rounded-full bg-[#5865f2]"><FaDiscord className="size-[23px] text-white" /></span>
      </Task>
      <Task running>
        <svg viewBox="0 0 36 36" className={S}><path fill="#0a74c4" d="M0 13l3-3 24 18v8L0 14.500z" /><path fill="#1386d3" d="M0 23l3 3L27 8V0L0 21.500z" /><path fill="#2ba4ef" d="M26.500 0L36 4.500v27L26.500 36z" /></svg>
      </Task>
      <Task running>
        <svg viewBox="0 0 36 36" className={S}><rect y="4" width="36" height="27" rx="1.500" fill="#424242" /><path fill="#c4c4c4" d="M0 9V5q0-1 1-1h11v5z" /><path fill="#9a9a9a" d="M12 4h12v5H12z" /><path fill="#6f6f6f" d="M24 4h11q1 0 1 1v4H24z" /><path d="M6 13.500l7 6.500-7 6.500" fill="none" stroke="#d0d0d0" strokeWidth="3.600" /><path fill="#eee" d="M17 23h12v4H17z" /></svg>
      </Task>
      <Task running>
        <svg viewBox="0 0 36 36" className={S}><circle cx="18" cy="18" r="16" fill="#fff" /><path fill="#13a152" d="M18 8c7 8 6 13 0 18z" /><path fill="#0d7f41" d="M18 8c-7 8-6 13 0 18z" /><path stroke="#999" d="M18 25v4" /></svg>
      </Task>
      <Task running>
        <svg viewBox="0 0 36 36" className={S}><path fill="#5c4650" d="M2 9l16 9 16-9v18l-16 9L2 27z" /><path fill="#e2a662" d="M18 0l16 9.500V22q-2 2-3 0v-3q-2-1-2 2v3q-1 2-2.500 0v-3l-4 2v2q-2 2-3 0v-2h-5q-1 4-4 2v-4q-3-1-4-2v2q-3 1-4.500-1V9.500z" /><path d="M3 10l15 8 15-8" stroke="#f6dcb0" fill="none" /></svg>
      </Task>
      <Task>
        <div className="flex size-[60px] shrink-0 items-center justify-center rounded-md border border-[#503a33] bg-[#3f2c28]">
          <svg viewBox="0 0 36 36" className="size-9 overflow-visible"><rect width="27" height="27" rx="2.500" fill="#eceff1" /><path stroke="#d83b01" strokeWidth="4" strokeDasharray="4 2.200" fill="none" d="M3 5h17M5 9v13" /><path fill="#a0a5aa" d="M18 8h4v14h10v2H8v-2h10z" /><g fill="none" stroke="#1c93e0" strokeWidth="2.600"><circle cx="32" cy="18.500" r="3.200" /><circle cx="19" cy="32" r="3.200" /></g><path stroke="#8a8f94" strokeWidth="2.500" d="M21 29V18M29 20H18" /></svg>
        </div>
        <i className="absolute bottom-[6px] left-[21px] h-[5px] w-[24px] rounded-full bg-[#d9bd95]" />
      </Task>
      <Task running>
        <Chrome><g transform="translate(7 0)"><circle cx="29" cy="14" r="12.500" fill="#ef8a2b" /><path fill="#c41a24" d="M24 16l6-6 7 3 3 5-5 5-8 2z" /><path fill="#35171a" d="M26 22l5-5 2 5 5-1-4 4z" /><path fill="#f4c74a" d="M27 5l4 1-1 4-3-1z" /></g></Chrome>
      </Task>
      <Task running>
        <svg viewBox="0 0 36 36" className={S}><rect width="36" height="36" rx="2.500" fill="#1a93d8" /><rect x="4" y="4" width="28" height="28" rx="2" fill="#fff" /><path fill="#4a4a4a" d="M8 8h9v4h-5v12h5v4H8zM28 8h-9v4h5v12h-5v4h9z" /></svg>
      </Task>
      <Task running>
        <svg viewBox="0 0 36 36" className={S}><path fill="#6fd2ee" d="M4 3q0-1 1-1h26q1 0 1 1v27H4z" /><path fill="#f3f3f3" d="M4 30h28v3H4z" /><path fill="#c1580e" d="M4 33h28v3H4z" /><path stroke="#0b6a93" strokeWidth="2" d="M9 11h18M9 17h18M9 23h18" /><path stroke="#0d4e6e" strokeWidth="2.600" strokeLinecap="round" d="M8.500 1.500v2.500M15 1.500v2.500M21 1.500v2.500M27.500 1.500v2.500" /></svg>
      </Task>
      <Task running>
        <Fox className="absolute left-[13px] top-[19px] size-[36px]" />
        <Dragon className="absolute left-[35px] top-[12px] size-[23px]" />
      </Task>
      <div className="flex flex-1 items-center pl-[76px] text-white">
        <svg viewBox="0 0 18 10" className="h-[10px] w-[18px]" fill="none" stroke="#fff" strokeWidth="1.500"><path d="M.5 9.500L9 1l8.500 8.500" /></svg>
        <svg viewBox="0 0 24 18" className="ml-[33px] h-[18px] w-[24px]" fill="none" stroke="#fff" strokeWidth="1.500"><rect x=".8" y=".8" width="22.400" height="16.400" rx="2" /><path strokeWidth="2" strokeDasharray="2 2.300" d="M4.500 5h15M6.500 9.200h11" /><path d="M5.500 13.400h13" /></svg>
        <svg viewBox="0 0 20 17" className="ml-[38px] h-[17px] w-[20px]" fill="none" stroke="#fff" strokeWidth="1.400"><path d="M.7.7h18.600v15.600H.7zM.7 11h18.600M10 11v5" /></svg>
        <div className="ml-[35px] w-[37px] pt-px text-lg leading-[23px]">ENG<br />INTL</div>
        <svg viewBox="0 0 26 18" className="ml-[25px] h-[18px] w-[26px]" fill="none" stroke="#fff" strokeWidth="1.700"><path d="M1.500 7a16 16 0 0 1 23 0M5 10.500a11 11 0 0 1 16 0M8.500 13.500a6.500 6.500 0 0 1 9 0" /><circle cx="13" cy="15.500" r="2" fill="#fff" stroke="none" /></svg>
        <svg viewBox="0 0 24 20" className="ml-[11px] h-[20px] w-[24px]" fill="none" stroke="#fff" strokeWidth="1.600"><path d="M1 7h4l5-4.500v15L5 13H1zM13 7q2 3 0 6M16 4q4.500 6 0 12M19.500 1.500q6 8.500 0 17" /></svg>
        <svg viewBox="0 0 25 19" className="ml-[11px] h-[19px] w-[25px]" fill="#fff"><path d="M1.500 0H3v3h2V0h1.500v3H8v3.500L5.500 9v10H4V9L.5 6.500V3h1z" /><path fillRule="evenodd" d="M9 3h11.500q2 0 2 2v3H25v5h-2.500v3q0 2-2 2H7v-1.500h13.500q.5 0 .5-.5V5q0-.5-.5-.5H9z" /><path d="M9 6h10.500v9H7v-5l2-2z" /></svg>
        <div className="ml-[21px] w-[95px] pt-px text-right text-lg leading-[23px]"><span className="tracking-[-0.38px]">22:49</span><br />04-04-2022</div>
        <svg viewBox="0 0 21 22" className="ml-[13px] h-[22px] w-[21px]" fill="none" stroke="#fff" strokeWidth="1.700"><path d="M9.500 1C21 2.500 22.500 16 14 20 9 22 4 20.500 1.500 16.500 9 15 11.500 8 9.500 1z" /></svg>
      </div>
    </div>
  );
}

export default function App() {
  return (
    <div className="relative flex h-[1080px] w-[1920px] flex-col overflow-hidden bg-black font-['Open_Sans',sans-serif]">
      <TabStrip />
      <Toolbar />
      <BookmarksBar />
      <div className="relative flex min-h-0 flex-1 overflow-hidden">
        <Sidebar />
        <AdminPage />
        <Drawer />
      </div>
      <Taskbar />
      <WalletWindow />
    </div>
  );
}
